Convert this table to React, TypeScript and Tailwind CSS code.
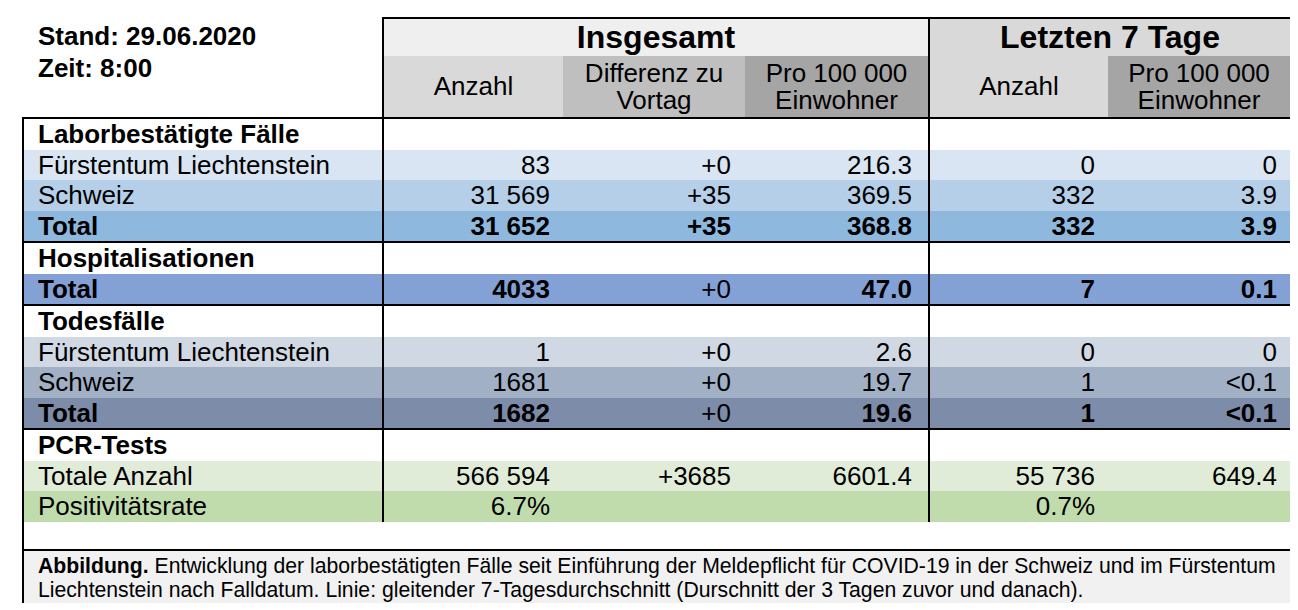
type RowProps = {
  label: string
  bg?: string
  bold?: boolean
  vals?: string[]
  boldVals?: boolean[]
  heading?: boolean
}

function Row({ label, bg = "bg-white", bold, vals = ["", "", "", "", ""], boldVals, heading }: RowProps) {
  const b = (i: number) => (boldVals ? boldVals[i] : bold) ? "font-bold" : ""
  return (
    <div className={`flex h-[30.5px] leading-[30.5px] ${bg}`}>
      <div className={`w-[358px] pl-[14px] whitespace-nowrap ${bold || heading ? "font-bold" : ""}`}>{label}</div>
      <div className={`w-[181px] border-l-2 border-black pr-[13px] text-right ${b(0)}`}>{vals[0]}</div>
      <div className={`w-[182px] pr-[14px] text-right ${b(1)}`}>{vals[1]}</div>
      <div className={`w-[183px] pr-[16px] text-right ${b(2)}`}>{vals[2]}</div>
      <div className={`w-[180px] border-l-2 border-black pr-[13px] text-right ${b(3)}`}>{vals[3]}</div>
      <div className={`w-[182px] pr-[13px] text-right ${b(4)}`}>{vals[4]}</div>
    </div>
  )
}

export default function App() {
  return (
    <div className="w-[1298px] h-[610px] bg-white text-black font-['Liberation_Sans',Arial,sans-serif] text-[26px] overflow-hidden">
      {/* top: stand + column headers */}
      <div className="flex">
        <div className="w-[382px] pl-[38px] pt-[20px] font-bold leading-[32px]">
          <div>Stand: 29.06.2020</div>
          <div>Zeit: 8:00</div>
        </div>
        <div className="mt-[17px] w-[908px] border-l-2 border-t-2 border-black">
          <div className="flex h-[37px] text-[32px] font-bold leading-[37px]">
            <div className="w-[544px] bg-[#efefef] text-center">Insgesamt</div>
            <div className="w-[362px] border-l-2 border-black bg-[#d9d9d9] text-center">Letzten 7 Tage</div>
          </div>
          <div className="flex h-[61px] leading-[27px] text-center">
            <div className="w-[179px] bg-[#d9d9d9] flex items-center justify-center">Anzahl</div>
            <div className="w-[182px] bg-[#bfbfbf] flex flex-col items-center justify-center">
              <span>Differenz zu</span>
              <span>Vortag</span>
            </div>
            <div className="w-[183px] bg-[#a5a5a5] flex flex-col items-center justify-center">
              <span>Pro 100 000</span>
              <span>Einwohner</span>
            </div>
            <div className="w-[180px] border-l-2 border-black bg-[#d9d9d9] flex items-center justify-center">Anzahl</div>
            <div className="w-[182px] bg-[#a5a5a5] flex flex-col items-center justify-center">
              <span>Pro 100 000</span>
              <span>Einwohner</span>
            </div>
          </div>
        </div>
      </div>

      {/* table body */}
      <div className="ml-[22px] w-[1268px] border-l-2 border-t-2 border-black">
        <Row label="Laborbestätigte Fälle" heading />
        <Row label="Fürstentum Liechtenstein" bg="bg-[#d9e5f2]" vals={["83", "+0", "216.3", "0", "0"]} />
        <Row label="Schweiz" bg="bg-[#b5cfe9]" vals={["31 569", "+35", "369.5", "332", "3.9"]} />
        <Row label="Total" bold bg="bg-[#8fb8de]" vals={["31 652", "+35", "368.8", "332", "3.9"]} />

        <div className="border-t-2 border-black">
          <Row label="Hospitalisationen" heading />
          <Row
            label="Total"
            bold
            bg="bg-[#84a1d5]"
            vals={["4033", "+0", "47.0", "7", "0.1"]}
            boldVals={[true, false, true, true, true]}
          />
        </div>

        <div className="border-t-2 border-black">
          <Row label="Todesfälle" heading />
          <Row label="Fürstentum Liechtenstein" bg="bg-[#d0d8e3]" vals={["1", "+0", "2.6", "0", "0"]} />
          <Row label="Schweiz" bg="bg-[#a1b0c5]" vals={["1681", "+0", "19.7", "1", "<0.1"]} />
          <Row
            label="Total"
            bold
            bg="bg-[#7d8ca8]"
            vals={["1682", "+0", "19.6", "1", "<0.1"]}
            boldVals={[true, false, true, true, true]}
          />
        </div>

        <div className="border-t-2 border-black">
          <Row label="PCR-Tests" heading />
          <Row label="Totale Anzahl" bg="bg-[#e0ecd7]" vals={["566 594", "+3685", "6601.4", "55 736", "649.4"]} />
          <Row label="Positivitätsrate" bg="bg-[#c0dcad]" vals={["6.7%", "", "", "0.7%", ""]} />
        </div>

        <div className="h-[27.5px]" />

        {/* caption */}
        <div className="border-t-2 border-black bg-[#f1f1f1] pl-[14px] pt-[3px] pb-[1px] text-[21.2px] leading-[24px] whitespace-nowrap">
          <span className="font-bold">Abbildung.</span> Entwicklung der laborbestätigten Fälle seit Einführung der Meldepflicht für COVID-19 in der Schweiz und im Fürstentum
          <br />
          Liechtenstein nach Falldatum. Linie: gleitender 7-Tagesdurchschnitt (Durschnitt der 3 Tagen zuvor und danach).
        </div>
      </div>
    </div>
  )
}
